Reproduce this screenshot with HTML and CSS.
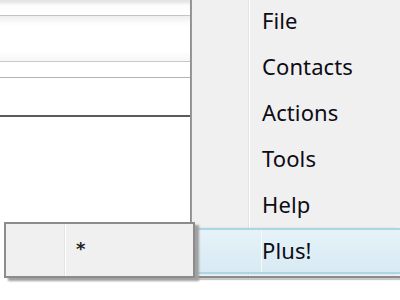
FILE: index.html
```html
<!DOCTYPE html>
<html>
<head>
<meta charset="utf-8">
<link rel="stylesheet" href="styles.css">
</head>
<body>
<div class="screen">
  <div class="pane">
    <div class="row row-top"></div>
    <div class="row row-a"></div>
    <div class="row row-b"></div>
    <div class="row row-c"></div>
    <div class="row row-d"></div>
  </div>
  <div class="menu">
    <div class="item"><span class="gutter"></span><span class="label">File</span></div>
    <div class="item"><span class="gutter"></span><span class="label">Contacts</span></div>
    <div class="item"><span class="gutter"></span><span class="label">Actions</span></div>
    <div class="item"><span class="gutter"></span><span class="label">Tools</span></div>
    <div class="item"><span class="gutter"></span><span class="label">Help</span></div>
    <div class="item active"><span class="gutter"></span><span class="label">Plus!</span></div>
  </div>
  <div class="submenu">
    <div class="sub-gutter"></div>
    <div class="sub-label">*</div>
  </div>
</div>
</body>
</html>
```
FILE: styles.css
```css
html, body {
  margin: 0;
  padding: 0;
  background: #ffffff;
}
.screen {
  position: relative;
  width: 400px;
  height: 300px;
  overflow: hidden;
  display: flex;
  font-family: "Noto Sans", "Open Sans", sans-serif;
}
.pane {
  width: 190px;
  height: 222px;
  border-right: 2px solid #909090;
  display: flex;
  flex-direction: column;
}
.row-top {
  height: 15px;
  background: linear-gradient(#e2e2e2 0, #ececec 3px, #fbfbfb 5px, #ffffff 14px);
  border-bottom: 1px solid #c4c4c4;
}
.row-a {
  height: 45px;
  background: linear-gradient(#eeeeee 0, #f8f8f8 5px, #ffffff 10px, #ffffff 35px, #f6f6f6 45px);
  border-bottom: 1px solid #c8c8c8;
}
.row-b {
  height: 15px;
  border-bottom: 1px solid #b4b4b4;
}
.row-c {
  height: 37px;
  border-bottom: 2px solid #5a5a5a;
}
.row-d {
  flex: 1;
}
.menu {
  width: 208px;
  height: 280px;
  margin-top: -2px;
  background: linear-gradient(to right, #f0f0f0 0, #f0f0f0 56px, #e2e3e3 56px, #e2e3e3 57px, #ffffff 57px, #ffffff 58px, #f0f0f0 58px);
  border-bottom: 2px solid #8a8a8a;
  box-shadow: 0 2px 1px #c8c8c8;
  box-sizing: border-box;
  display: flex;
  flex-direction: column;
}
.item {
  height: 46px;
  display: flex;
  align-items: center;
  flex-shrink: 0;
}
.gutter {
  width: 70px;
  flex-shrink: 0;
}
.label {
  font-size: 22px;
  color: #0c0c14;
  line-height: 44px;
  padding-bottom: 2px;
  letter-spacing: 0.1px;
}
.item.active {
  margin-left: 5px;
  height: 46px;
  box-sizing: border-box;
  border-top: 2px solid #aad6e6;
  border-bottom: 2px solid #aad6e6;
  background: linear-gradient(#e6f2f8, #d8eaf3);
  box-shadow: -3px 0 2px -1px #6a7a80;
}
.item.active .gutter {
  width: 65px;
  border-right: 1px solid #f4fafc;
  height: 100%;
  box-sizing: border-box;
}
.submenu {
  position: absolute;
  left: 4px;
  top: 222px;
  width: 191px;
  height: 56px;
  box-sizing: border-box;
  border: 2px solid #8c8c8c;
  background: #f0f0f0;
  display: flex;
  box-shadow: 4px 3px 2px #a0a0a0;
}
.sub-gutter {
  width: 58px;
  border-right: 1px solid #e2e3e3;
  box-shadow: 1px 0 0 #ffffff;
}
.sub-label {
  padding-left: 11px;
  padding-top: 14px;
  font-size: 18px;
  font-weight: bold;
  color: #222;
  font-family: "DejaVu Sans", sans-serif;
}
```
